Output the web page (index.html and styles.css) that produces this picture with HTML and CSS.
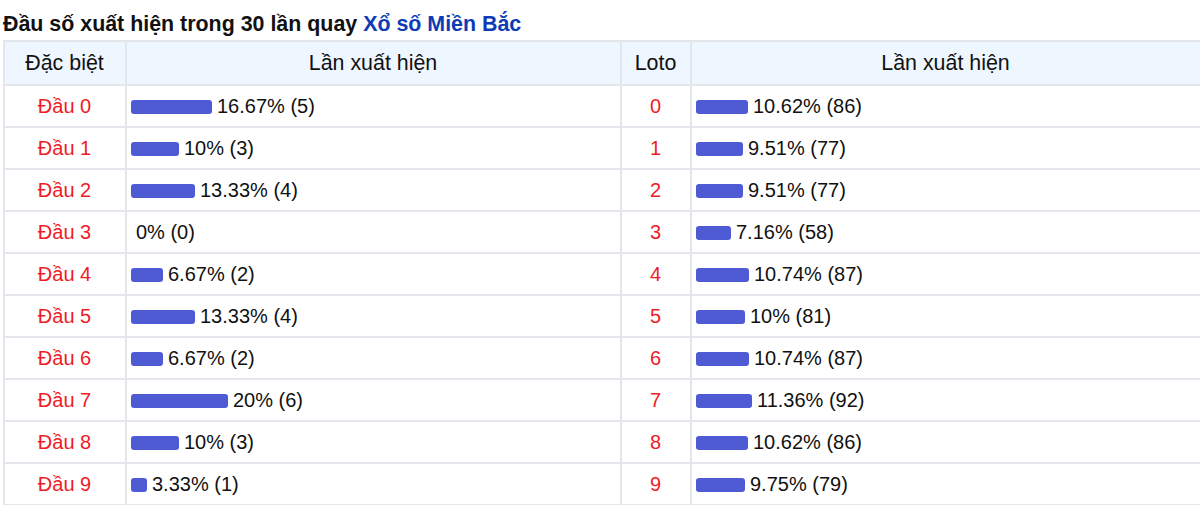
FILE: index.html
```html
<!DOCTYPE html>
<html lang="vi">
<head>
<meta charset="utf-8">
<title>Đầu số xuất hiện</title>
<link rel="stylesheet" href="styles.css">
</head>
<body>
<div class="wrap">
  <div class="title">Đầu số xuất hiện trong 30 lần quay <span class="link">Xổ số Miền Bắc</span></div>
  <table class="stats">
    <colgroup>
      <col class="c1"><col class="c2"><col class="c3"><col class="c4">
    </colgroup>
    <thead>
      <tr><th>Đặc biệt</th><th>Lần xuất hiện</th><th>Loto</th><th>Lần xuất hiện</th></tr>
    </thead>
    <tbody>
      <tr><td class="head">Đầu 0</td><td class="val"><span class="bar" style="width:81px"></span>16.67% (5)</td><td class="head">0</td><td class="val"><span class="bar" style="width:52px"></span>10.62% (86)</td></tr>
      <tr><td class="head">Đầu 1</td><td class="val"><span class="bar" style="width:48px"></span>10% (3)</td><td class="head">1</td><td class="val"><span class="bar" style="width:47px"></span>9.51% (77)</td></tr>
      <tr><td class="head">Đầu 2</td><td class="val"><span class="bar" style="width:64px"></span>13.33% (4)</td><td class="head">2</td><td class="val"><span class="bar" style="width:47px"></span>9.51% (77)</td></tr>
      <tr><td class="head">Đầu 3</td><td class="val"><span class="bar" style="width:0px"></span>0% (0)</td><td class="head">3</td><td class="val"><span class="bar" style="width:35px"></span>7.16% (58)</td></tr>
      <tr><td class="head">Đầu 4</td><td class="val"><span class="bar" style="width:32px"></span>6.67% (2)</td><td class="head">4</td><td class="val"><span class="bar" style="width:53px"></span>10.74% (87)</td></tr>
      <tr><td class="head">Đầu 5</td><td class="val"><span class="bar" style="width:64px"></span>13.33% (4)</td><td class="head">5</td><td class="val"><span class="bar" style="width:49px"></span>10% (81)</td></tr>
      <tr><td class="head">Đầu 6</td><td class="val"><span class="bar" style="width:32px"></span>6.67% (2)</td><td class="head">6</td><td class="val"><span class="bar" style="width:53px"></span>10.74% (87)</td></tr>
      <tr><td class="head">Đầu 7</td><td class="val"><span class="bar" style="width:97px"></span>20% (6)</td><td class="head">7</td><td class="val"><span class="bar" style="width:56px"></span>11.36% (92)</td></tr>
      <tr><td class="head">Đầu 8</td><td class="val"><span class="bar" style="width:48px"></span>10% (3)</td><td class="head">8</td><td class="val"><span class="bar" style="width:52px"></span>10.62% (86)</td></tr>
      <tr><td class="head">Đầu 9</td><td class="val"><span class="bar" style="width:16px"></span>3.33% (1)</td><td class="head">9</td><td class="val"><span class="bar" style="width:49px"></span>9.75% (79)</td></tr>
    </tbody>
  </table>
</div>
</body>
</html>
```
FILE: styles.css
```css
html, body {
  margin: 0;
  padding: 0;
  background: #ffffff;
}
body {
  font-family: "Liberation Sans", Arial, sans-serif;
  color: #111111;
}
.wrap {
  padding-left: 3px;
  width: 1197px;
}
.title {
  padding-top: 12px;
  margin-bottom: 3px;
  height: 25px;
  line-height: 25px;
  font-size: 21.4px;
  font-weight: bold;
  color: #111111;
  white-space: nowrap;
}
.link {
  color: #0d3cb6;
}
.stats {
  width: 1197px;
  border-collapse: collapse;
  table-layout: fixed;
  font-size: 20px;
}
.c1 { width: 122px; }
.c2 { width: 495px; }
.c3 { width: 70px; }
.c4 { width: 510px; }
.stats th,
.stats td {
  border: 2px solid #e3e6ea;
  padding: 0 5px 0 4px;
  white-space: nowrap;
}
.stats th {
  height: 42px;
  background: #eef6ff;
  font-weight: normal;
  font-size: 21.4px;
  text-align: center;
  color: #111111;
}
.stats td {
  height: 40px;
}
.stats td.head {
  text-align: center;
  color: #ee1c25;
}
.stats td.val {
  text-align: left;
  color: #111111;
}
.bar {
  display: inline-block;
  height: 14px;
  border-radius: 3px;
  background: #4f5bd5;
  margin-right: 5px;
  vertical-align: -1px;
}
```
